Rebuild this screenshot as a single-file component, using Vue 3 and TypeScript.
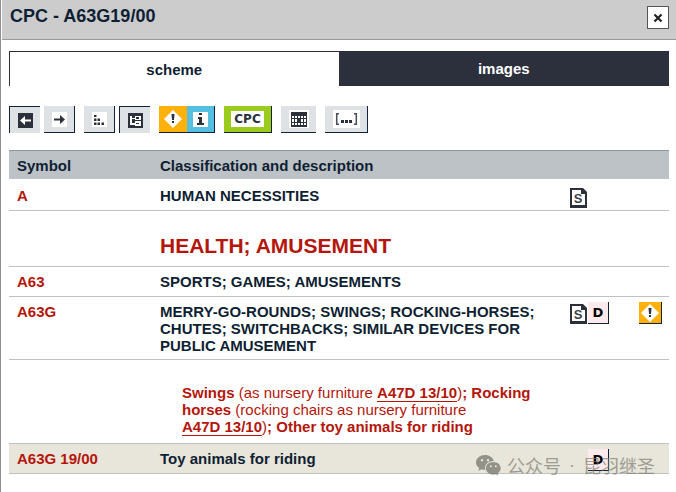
<script setup lang="ts">
import { ref } from 'vue'

type Tab = 'scheme' | 'images'

const activeTab = ref<Tab>('scheme')
const tabs: Tab[] = ['scheme', 'images']
</script>

<template>
  <main class="panel">
    <header class="title-bar">
      <h1>CPC - A63G19/00</h1>
      <button class="close" type="button" aria-label="Close">
        <svg width="10" height="10" viewBox="0 0 10 10" aria-hidden="true">
          <path d="M1.500 1.500 8.500 8.500M8.500 1.500 1.500 8.500" stroke="#222" stroke-width="2.200" />
        </svg>
      </button>
    </header>

    <div class="content">
      <nav class="tabs" role="tablist">
        <button
          v-for="tab in tabs"
          :key="tab"
          type="button"
          role="tab"
          class="tab"
          :class="{ active: activeTab === tab }"
          :aria-selected="activeTab === tab"
          @click="activeTab = tab"
        >{{ tab }}</button>
      </nav>

      <div class="toolbar">
        <div class="group">
          <button class="tool pressed" type="button" aria-label="Previous">
            <svg width="15" height="15" viewBox="0 0 15 15" aria-hidden="true">
              <rect width="15" height="15" fill="#2b303a" />
              <path d="M2 7.500 7 3v3.500h6v2H7V12z" fill="#fff" />
            </svg>
          </button>
          <button class="tool raised" type="button" aria-label="Next">
            <svg width="15" height="15" viewBox="0 0 15 15" aria-hidden="true">
              <rect width="15" height="15" fill="#fff" />
              <path d="M13 7.500 8 3v3.500H2v2h6V12z" fill="#2b303a" />
            </svg>
          </button>
        </div>
        <div class="group">
          <button class="tool raised" type="button" aria-label="Indentation">
            <svg width="15" height="15" viewBox="0 0 15 15" aria-hidden="true">
              <rect width="15" height="15" fill="#fff" />
              <path d="M2 3h2.500v2H2zM2 6.500h2.500v2.500H2zM5.500 6.500H8v2.500H5.500zM2 10.500h2.500V13H2zM5.500 10.500H8V13H5.500zM9.500 10.500H12V13H9.500z" fill="#2b303a" />
            </svg>
          </button>
          <button class="tool pressed" type="button" aria-label="Tree">
            <svg width="15" height="15" viewBox="0 0 15 15" aria-hidden="true">
              <rect width="15" height="15" fill="#2b303a" />
              <path d="M2 3h2v2h3V3h6v4H7V6H4v4h3V8h6v5H7v-1H2z" fill="#fff" />
              <path d="M8 4h3v2H8zM8 10h3v1H8z" fill="#2b303a" />
            </svg>
          </button>
        </div>
        <div class="group joined">
          <button class="tool warn" type="button" aria-label="Warnings">
            <svg width="18" height="18" viewBox="0 0 18 18" aria-hidden="true">
              <path d="M9 0 18 9 9 18 0 9z" fill="#fff" />
              <path d="M7.500 4h3L10 10H8zM8 11h2v2H8z" fill="#2b303a" />
            </svg>
          </button>
          <button class="tool info" type="button" aria-label="Information">
            <svg width="15" height="15" viewBox="0 0 15 15" aria-hidden="true">
              <rect width="15" height="15" fill="#fff" />
              <path d="M6 1h3v2H6zM5 5h4v6h2v2H4v-2h2V7H5z" fill="#2b303a" />
            </svg>
          </button>
        </div>
        <button class="tool cpc" type="button"><span>CPC</span></button>
        <button class="tool calendar" type="button" aria-label="Table">
          <svg width="20" height="18" viewBox="0 0 20 18" aria-hidden="true">
            <rect width="20" height="18" fill="#fff" />
            <path d="M2 2h16v15H2z" fill="#2b303a" />
            <path d="M3 6h2v2H3zM6 6h2v2H6zM9 6h2v2H9zM12 6h2v2h-2zM15 6h2v2h-2zM3 9h2v3H3zM6 9h2v3H6zM12 9h2v3h-2zM15 9h2v3h-2zM3 13h2v2H3zM6 13h2v2H6zM9 13h2v2H9zM12 13h2v2h-2zM15 13h2v2h-2z" fill="#fff" />
          </svg>
        </button>
        <button class="tool raised references" type="button" aria-label="References">
          <svg width="27" height="18" viewBox="0 0 27 18" aria-hidden="true">
            <rect width="27" height="18" fill="#fff" />
            <path d="M6 3.700H3.700v10.600H6M21 3.700h2.300v10.600H21" fill="none" stroke="#4a4e56" stroke-width="1.500" />
            <path d="M8 10h3v3H8zM12 10h3v3h-3zM16 10h3v3h-3z" fill="#2b303a" />
          </svg>
        </button>
      </div>

      <table class="scheme">
        <colgroup>
          <col class="col-symbol" />
          <col />
          <col class="col-marks" />
          <col class="col-warning" />
        </colgroup>
        <thead>
          <tr>
            <th scope="col">Symbol</th>
            <th scope="col">Classification and description</th>
            <td></td>
            <td></td>
          </tr>
        </thead>
        <tbody>
          <tr class="row-tall">
            <td><a class="symbol" href="#A">A</a></td>
            <td>HUMAN NECESSITIES</td>
            <td class="marks">
              <div class="mark-list">
                <a class="mark-s" href="#statistics-A" aria-label="Statistics">
                  <svg width="17" height="20" viewBox="0 0 17 20" aria-hidden="true">
                    <path d="M1 1h11l4 4v13H1z" fill="#fff" stroke="#2b303a" stroke-width="2" />
                    <path d="M11 0h2l4 4v2h-6zM0 18h17v2H0z" fill="#2b303a" />
                    <text x="8" y="15" text-anchor="middle">S</text>
                  </svg>
                </a>
              </div>
            </td>
            <td></td>
          </tr>
          <tr class="row-heading">
            <td></td>
            <td colspan="3"><h2>HEALTH; AMUSEMENT</h2></td>
          </tr>
          <tr>
            <td><a class="symbol" href="#A63">A63</a></td>
            <td>SPORTS; GAMES; AMUSEMENTS</td>
            <td></td>
            <td></td>
          </tr>
          <tr class="row-group">
            <td><a class="symbol" href="#A63G">A63G</a></td>
            <td>MERRY-GO-ROUNDS; SWINGS; ROCKING-HORSES; CHUTES; SWITCHBACKS; SIMILAR DEVICES FOR PUBLIC AMUSEMENT</td>
            <td class="marks">
              <div class="mark-list">
                <a class="mark-s" href="#statistics-A63G" aria-label="Statistics">
                  <svg width="17" height="20" viewBox="0 0 17 20" aria-hidden="true">
                    <path d="M1 1h11l4 4v13H1z" fill="#fff" stroke="#2b303a" stroke-width="2" />
                    <path d="M11 0h2l4 4v2h-6zM0 18h17v2H0z" fill="#2b303a" />
                    <text x="8" y="15" text-anchor="middle">S</text>
                  </svg>
                </a>
                <a class="mark-d" href="#definition-A63G">D</a>
              </div>
            </td>
            <td class="marks">
              <a class="mark-warn" href="#warning-A63G" aria-label="Warning">
                <svg width="18" height="18" viewBox="0 0 18 18" aria-hidden="true">
                  <path d="M9 0 18 9 9 18 0 9z" fill="#fff" />
                  <path d="M7.500 4h3L10 10H8zM8 11h2v2H8z" fill="#2b303a" />
                </svg>
              </a>
            </td>
          </tr>
          <tr class="row-note">
            <td></td>
            <td>
              <p>
                <b>Swings</b> (as nursery furniture <a href="#A47D13/10">A47D 13/10</a>)<b>; Rocking horses</b>
                (rocking chairs as nursery furniture <a href="#A47D13/10">A47D 13/10</a>)<b>; Other toy animals for riding</b>
              </p>
            </td>
            <td></td>
            <td></td>
          </tr>
          <tr class="row-selected">
            <td><a class="symbol" href="#A63G19/00">A63G 19/00</a></td>
            <td>Toy animals for riding</td>
            <td class="marks">
              <div class="mark-list end">
                <a class="mark-d" href="#definition-A63G19">D</a>
              </div>
            </td>
            <td></td>
          </tr>
        </tbody>
      </table>

      <div class="watermark">
        <svg width="25" height="21" viewBox="0 0 25 21" aria-hidden="true">
          <path
            fill-rule="evenodd"
            d="M9 0C4 0 0 3.300 0 7.400c0 2.300 1.300 4.300 3.200 5.700L2.300 16l3.200-1.700c1.100.4 2.300.6 3.700.5C8 10.300 11.500 6 17.800 6 17 2.500 13.400 0 9 0zM6 4a1.200 1.200 0 1 1 0 2.400A1.200 1.200 0 0 1 6 4zm6 0a1.200 1.200 0 1 1 0 2.400A1.200 1.200 0 0 1 12 4z"
          />
          <path
            fill-rule="evenodd"
            d="M17.300 7C13 7 9.800 9.900 9.800 13.300s3.200 6.300 7.500 6.300c.9 0 1.800-.2 2.600-.4l2.400 1.400-.6-2.300c1.800-1.200 3-3 3-5C24.700 9.900 21.500 7 17.300 7zm-2.400 3.300a1 1 0 1 1 0 2 1 1 0 0 1 0-2zm4.900 0a1 1 0 1 1 0 2 1 1 0 0 1 0-2z"
          />
        </svg>
        <span>公众号</span><span class="dot">·</span><span>昆羽继圣</span>
      </div>
    </div>
  </main>
</template>

<style>
body {
  margin: 0;
  background: #fff;
}
</style>

<style scoped>
.panel {
  box-sizing: border-box;
  min-height: 100vh;
  border-left: 1px solid #8e8e8e;
  padding-left: 1px;
  font-family: "Liberation Sans", Arial, sans-serif;
  font-size: 15px;
  line-height: 17px;
  color: #0f1f33;
}

.title-bar {
  display: flex;
  align-items: flex-start;
  justify-content: space-between;
  box-sizing: border-box;
  height: 40px;
  padding: 6px 7px 0 8px;
  background: #ccc;
  border-bottom: 1px solid #999;
}

h1 {
  margin: 0;
  font-size: 18px;
  line-height: 20px;
}

button {
  margin: 0;
  padding: 0;
  border: 0;
  border-radius: 0;
  color: inherit;
  font: inherit;
  cursor: pointer;
}

svg {
  display: block;
}

.close {
  display: flex;
  align-items: center;
  justify-content: center;
  width: 22px;
  height: 23px;
  background: #fff;
  border: 1px solid #555;
}

.content {
  position: relative;
  padding: 11px 7px 19px;
}

.tabs {
  display: flex;
}

.tab {
  flex: 1;
  height: 35px;
  background: #2b303c;
  border: 1px solid #2b303c;
  color: #fff;
  font-weight: bold;
}

.tab.active {
  background: #fff;
  border-width: 1px 0 0 1px;
  color: #0f1f33;
}

.toolbar {
  display: flex;
  gap: 9px;
  margin-top: 20px;
}

.group {
  display: flex;
  gap: 4px;
}

.group.joined {
  gap: 0;
}

.tool {
  display: flex;
  align-items: center;
  justify-content: center;
  box-sizing: border-box;
  width: 31px;
  height: 27px;
  background: #dfe2e5;
  border: 0 solid #10233a;
}

.pressed {
  border-width: 1px 0 0 1px;
}

.raised {
  border-width: 0 1px 1px 0;
}

.warn {
  width: 28px;
  background: #fdb10c;
  border-bottom-width: 1px;
}

.info {
  width: 28px;
  background: #55bfe2;
  border-width: 0 1px 1px 0;
}

.cpc {
  width: 48px;
  background: #9bcb1c;
  border-width: 0 1px 1px 0;
}

.cpc span {
  padding: 0 3px;
  background: #fff;
  color: #2b303a;
  font: bold 12px/16px "DejaVu Sans", sans-serif;
}

.calendar {
  width: 35px;
  border-bottom-width: 1px;
}

.references {
  width: 43px;
}

.scheme {
  width: 100%;
  margin-top: 17px;
  table-layout: fixed;
  border-collapse: separate;
  border-spacing: 0;
  font-weight: bold;
}

.col-symbol {
  width: 143px;
}

.col-marks {
  width: 77px;
}

.col-warning {
  width: 30px;
}

th,
td {
  padding: 6px 8px;
  text-align: left;
  vertical-align: top;
}

tbody td:nth-child(2) {
  padding-right: 20px;
}

thead th,
thead td {
  padding: 6px 8px 5px;
  background: #bdc2c6;
  border-top: 1px solid #8f9498;
}

tbody td {
  border-bottom: 1px solid #bfc2c4;
}

.row-tall td {
  padding-top: 8px;
}

.row-heading td {
  padding-top: 23px;
  padding-bottom: 8px;
}

.row-group td {
  padding-bottom: 5px;
}

.row-note td {
  padding-top: 24px;
  padding-bottom: 8px;
}

.row-selected td {
  background: #e8e6da;
}

h2 {
  margin: 0;
  color: #b5160b;
  font-size: 21px;
  line-height: 24px;
}

.symbol {
  color: #b5160b;
  text-decoration: none;
}

.row-note p {
  margin: 0;
  padding-left: 22px;
  color: #b5160b;
  font-weight: normal;
}

.row-note a {
  color: inherit;
  font-weight: bold;
  text-decoration: none;
  white-space: nowrap;
  border-bottom: 1px solid #b5160b;
}

tbody td.marks {
  padding: 5px 0 0 8px;
}

tbody .row-tall td.marks {
  padding-top: 7px;
}

tbody td.marks + td.marks {
  padding-left: 0;
}

.mark-list {
  display: flex;
  align-items: flex-end;
  gap: 1px;
}

.row-tall .mark-list {
  padding-top: 2px;
}

.mark-list.end {
  padding-left: 18px;
}

.mark-s text {
  fill: #3c4048;
  font: bold 13px "Liberation Sans", Arial, sans-serif;
}

.mark-d {
  box-sizing: border-box;
  width: 21px;
  height: 22px;
  background: #fdeaec;
  border: solid #10233a;
  border-width: 0 1px 1px 0;
  color: #000;
  font: bold 13px/22px "DejaVu Sans", sans-serif;
  text-align: center;
  text-decoration: none;
}

.mark-warn {
  display: flex;
  align-items: center;
  justify-content: center;
  box-sizing: border-box;
  width: 23px;
  height: 22px;
  background: #fdb10c;
  border: solid #10233a;
  border-width: 0 1px 1px 0;
}

.watermark {
  position: absolute;
  right: 21px;
  bottom: 16px;
  display: flex;
  align-items: center;
  gap: 8px;
  color: #77776f;
  font: 18px/24px "Noto Sans CJK SC", sans-serif;
  opacity: 0.65;
  pointer-events: none;
}

.watermark svg {
  margin-right: -2px;
  fill: #66665f;
}

.watermark .dot {
  font-family: "Liberation Sans", Arial, sans-serif;
}
</style>
